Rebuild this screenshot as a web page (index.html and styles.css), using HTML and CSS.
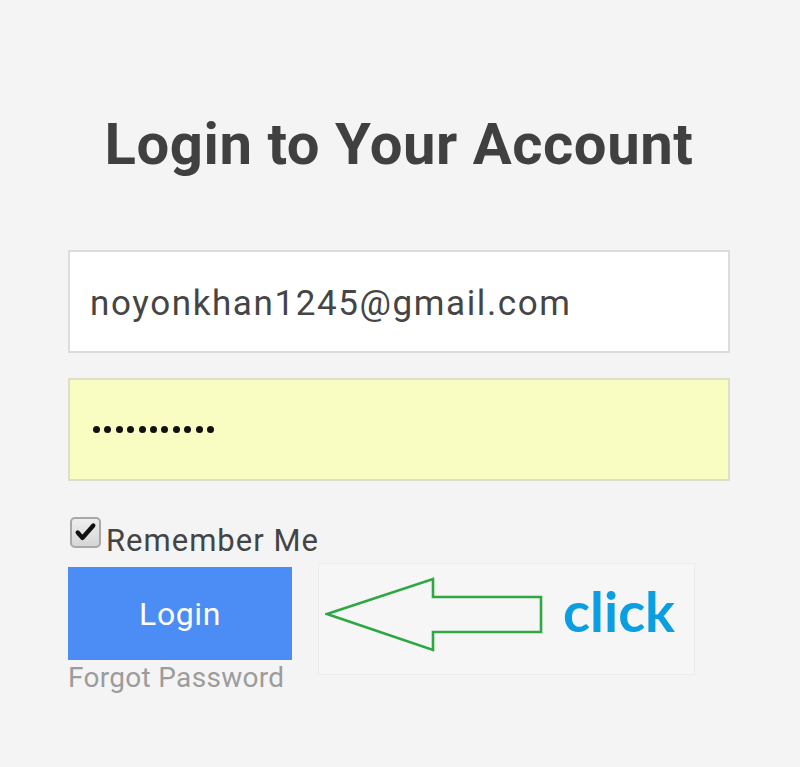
FILE: index.html
```html
<!DOCTYPE html>
<html>
<head>
<meta charset="utf-8">
<link rel="stylesheet" href="styles.css">
</head>
<body>
<div class="page">
  <h1 class="title">Login to Your Account</h1>
  <div class="field field-email">noyonkhan1245@gmail.com</div>
  <div class="field field-pass">
    <span class="dot"></span><span class="dot"></span><span class="dot"></span><span class="dot"></span><span class="dot"></span><span class="dot"></span><span class="dot"></span><span class="dot"></span><span class="dot"></span><span class="dot"></span><span class="dot"></span>
  </div>
  <div class="remember">
    <span class="checkbox">
      <svg viewBox="0 0 32 32" width="32" height="32"><path d="M6 16 L12 23 L26 7" fill="none" stroke="#111" stroke-width="5.5" stroke-linecap="round" stroke-linejoin="round"/></svg>
    </span>
    <span class="remember-label">Remember Me</span>
  </div>
  <div class="action-row">
    <div class="left-col">
      <div class="login-btn">Login</div>
      <div class="forgot">Forgot Password</div>
    </div>
    <div class="hint">
      <svg class="arrow" width="218" height="76" viewBox="325 577 218 76">
        <polygon points="327,614 433,579 433,597 541,597 541,632 433,632 433,650" fill="none" stroke="#2fa844" stroke-width="2.6" stroke-linejoin="miter"/>
      </svg>
      <span class="click">click</span>
    </div>
  </div>
</div>
</body>
</html>
```

FILE: styles.css
```css
html, body {
  margin: 0;
  padding: 0;
  background: #f4f4f4;
}
body {
  font-family: Roboto, "Noto Sans", sans-serif;
  width: 800px;
  height: 767px;
  overflow: hidden;
}
.page {
  padding: 109px 0 0 68px;
  width: 662px;
}
.title {
  margin: 0;
  width: 662px;
  text-align: center;
  font-size: 58px;
  line-height: 70px;
  font-weight: 700;
  color: #404040;
  letter-spacing: 0.55px;
}
.field {
  box-sizing: border-box;
  height: 103px;
  border: 2px solid #dcdcdc;
  display: flex;
  align-items: center;
  padding-left: 20px;
}
.field-email {
  margin-top: 71px;
  background: #ffffff;
  font-size: 35px;
  letter-spacing: 1.6px;
  color: #454545;
  padding-top: 3px;
}
.field-pass {
  margin-top: 25px;
  background: #fafdc2;
  border-color: #dedfc8;
  padding-left: 23px;
  gap: 4.4px;
}
.dot {
  width: 7px;
  height: 7px;
  border-radius: 50%;
  background: #111;
}
.remember {
  margin-top: 36px;
  height: 42px;
  display: flex;
  align-items: flex-start;
}
.checkbox {
  box-sizing: border-box;
  width: 31px;
  height: 31px;
  margin-left: 2px;
  border: 2px solid #a8a8a8;
  border-radius: 5px;
  background: linear-gradient(#eeeeee, #d6d6d6);
  display: flex;
  align-items: center;
  justify-content: center;
}
.checkbox svg {
  width: 25px;
  height: 25px;
}
.remember-label {
  margin-left: 5px;
  margin-top: 6px;
  font-size: 31px;
  letter-spacing: 1px;
  color: #444;
  line-height: 36px;
}
.action-row {
  margin-top: 4px;
  display: flex;
  align-items: flex-start;
}
.left-col {
  display: flex;
  flex-direction: column;
}
.login-btn {
  margin-top: 4px;
  width: 224px;
  height: 93px;
  background: #4b8cf5;
  color: #fff;
  font-size: 32px;
  letter-spacing: 0.6px;
  display: flex;
  align-items: center;
  justify-content: center;
}
.forgot {
  margin-top: 1px;
  font-size: 28px;
  letter-spacing: 0.3px;
  line-height: 34px;
  color: #9c9c9c;
}
.hint {
  box-sizing: border-box;
  margin-left: 26px;
  width: 377px;
  height: 112px;
  border: 1px solid #ececec;
  background: #f6f6f6;
  display: flex;
  align-items: flex-start;
  padding: 13px 0 0 6px;
}
.arrow {
  display: block;
  flex: none;
}
.click {
  margin-left: 20px;
  margin-top: 6px;
  font-family: Lato, "Open Sans", sans-serif;
  font-weight: 700;
  font-size: 56px;
  line-height: 56px;
  color: #0b9ee2;
}
```
